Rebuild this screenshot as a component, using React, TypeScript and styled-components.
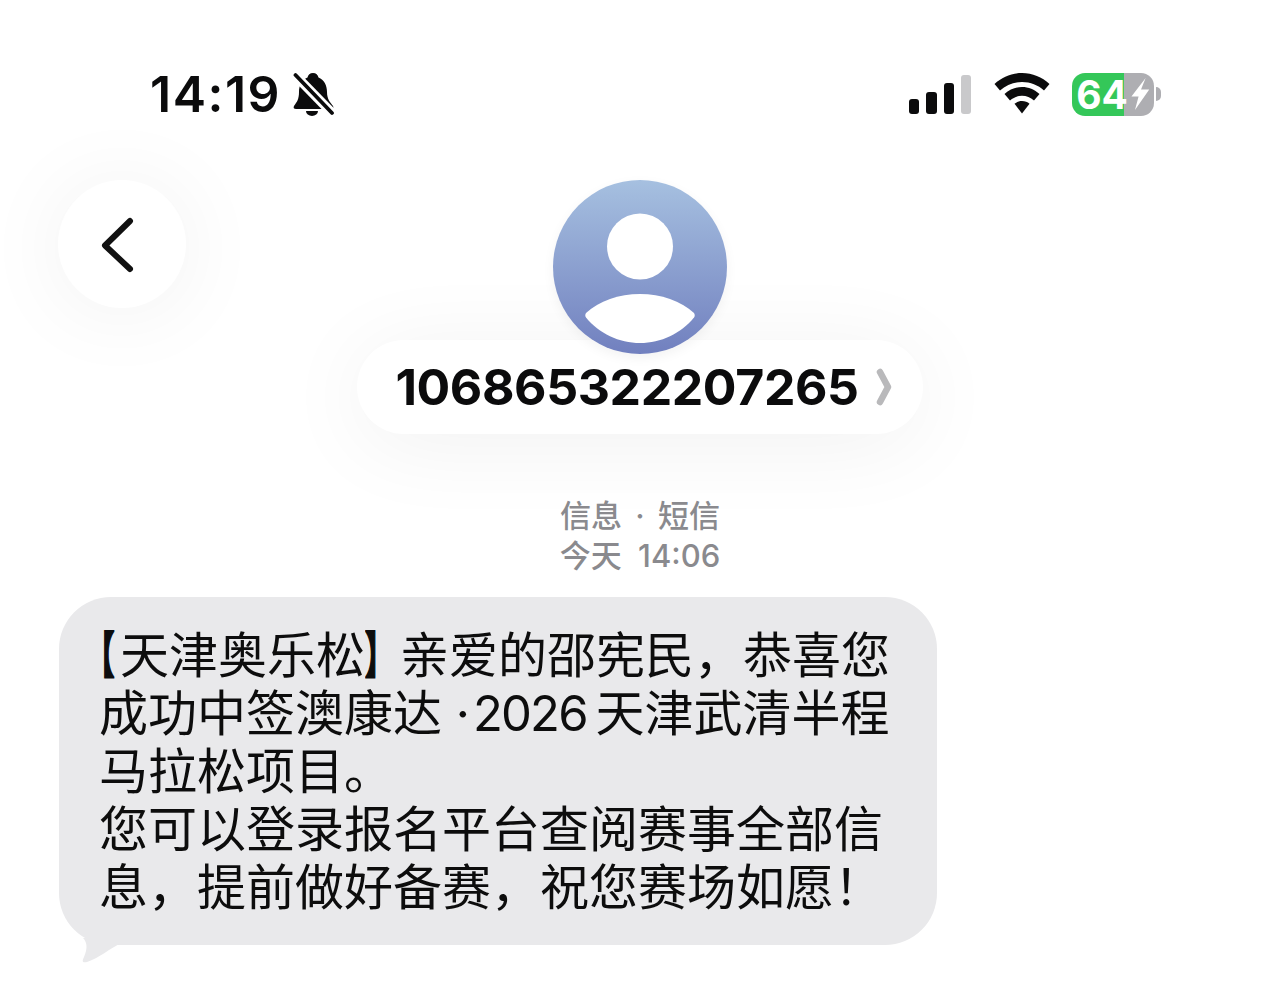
import React from 'react'
import styled, { createGlobalStyle } from 'styled-components'

const GlobalStyle = createGlobalStyle`
	html, body {
		margin: 0;
		padding: 0;
		background: #ffffff;
	}
	body {
		font-family: Inter, "Noto Sans CJK SC", sans-serif;
		color: #0b0b0c;
	}
`

export default function App() {
	return (
		<Page>
			<GlobalStyle />
			<StatusBar>
				<TimeGroup>
					<Time>14:19</Time>
					<svg width="42" height="44" viewBox="0 0 42 44">
						<path
							d="M20 1c3 0 5 2 5.500 4.500C31 8 34 13 34 20c0 7 3 10 6 14 1 2 0 3-2 3H3c-2 0-3-1-2-3 3-4 5-7 5-14C6 13 9 8 14.500 5.500 15 3 17 1 20 1z"
							fill="#0b0b0c"
						/>
						<path d="M13 39h12a6 5 0 0 1-12 0z" fill="#0b0b0c" />
						<path d="M0 1L41 43" stroke="#ffffff" strokeWidth="9.500" />
						<path d="M2.500 3L39 41" stroke="#0b0b0c" strokeWidth="3.800" strokeLinecap="round" />
					</svg>
				</TimeGroup>
				<Indicators>
					<SignalBars>
						<Bar $height={15} />
						<Bar $height={22} />
						<Bar $height={31} />
						<Bar $height={39} $off />
					</SignalBars>
					<WifiIcon width="56" height="41" viewBox="0 0 56 41">
						<path d="M28 0c10.500 0 20 4 27.500 11l-5.500 6.500C44 12 36.500 9 28 9S12 12 6 17.500L.5 11C8 4 17.500 0 28 0z" fill="#0b0b0c" />
						<path d="M28 14c6.500 0 12.500 2.500 17.500 7L40 27.500c-3.500-3-7.500-4.800-12-4.800S19.500 24.500 16 27.500L10.500 21c5-4.500 11-7 17.500-7z" fill="#0b0b0c" />
						<path d="M28 28c3 0 5.500 1 7.500 2.800L28 40.500l-7.500-9.700C22.500 29 25 28 28 28z" fill="#0b0b0c" />
					</WifiIcon>
					<BatteryWrap>
						<Battery $level={64}>
							<span>64</span>
							<svg width="19" height="32" viewBox="0 0 17 30">
								<path d="M13.300 0L0 17.300h6.700L3.300 30 16.700 10.700H9z" fill="#ffffff" />
							</svg>
						</Battery>
						<BatteryNub />
					</BatteryWrap>
				</Indicators>
			</StatusBar>

			<Header>
				<BackButton>
					<svg width="40" height="60" viewBox="0 0 40 60">
						<path d="M30 5L5 29.500L30 53" fill="none" stroke="#111111" strokeWidth="6" strokeLinecap="round" strokeLinejoin="round" />
					</svg>
				</BackButton>
				<Contact>
					<Avatar>
						<svg width="174" height="174" viewBox="0 0 174 174">
							<circle cx="87" cy="66.500" r="33" fill="#ffffff" />
							<path
								d="M33 133c13-12 33-19 54-19s41 7 54 19c1 1.500 1 3 0 4.500-13 16-33 25.500-54 25.500s-41-9.500-54-25.500c-1-1.500-1-3 0-4.500z"
								fill="#ffffff"
							/>
						</svg>
					</Avatar>
					<NamePill>
						<PhoneNumber>106865322207265</PhoneNumber>
						<svg width="18" height="38" viewBox="0 0 18 38">
							<path d="M5 4L13 19L5 34" fill="none" stroke="#b9b9bb" strokeWidth="6.500" strokeLinecap="round" strokeLinejoin="round" />
						</svg>
					</NamePill>
				</Contact>
			</Header>

			<Meta>
				<MetaLine $spacing={5}>信息 · 短信</MetaLine>
				<MetaLine $spacing={8}>今天 14:06</MetaLine>
			</Meta>

			<Bubble>
				<Line>
					<Bracket $open>【</Bracket>天津奥乐松<Bracket>】</Bracket>亲爱的邵宪民，恭喜您
				</Line>
				<Line>
					成功中签澳康达 ·<Digits>2026</Digits> 天津武清半程
				</Line>
				<Line>马拉松项目。</Line>
				<Line>您可以登录报名平台查阅赛事全部信</Line>
				<Line>息，提前做好备赛，祝您赛场如愿！</Line>
				<BubbleTail width="44" height="28" viewBox="0 0 44 28">
					<path d="M4 0c4 4 5 10 1 19-2 4-2 6 3 5 12-4 22-13 36-20V0z" fill="#e9e9eb" />
				</BubbleTail>
			</Bubble>
		</Page>
	)
}

const Page = styled.div`
	width: 1280px;
	height: 998px;
	overflow: hidden;
	display: flex;
	flex-direction: column;
	background: #ffffff;
`

const StatusBar = styled.div`
	display: flex;
	align-items: center;
	justify-content: space-between;
	height: 44px;
	margin-top: 72px;
	padding: 0 119px 0 150px;
`

const TimeGroup = styled.div`
	display: flex;
	align-items: center;
	gap: 12px;
`

const Time = styled.span`
	font-size: 50px;
	font-weight: 600;
	line-height: 44px;
	letter-spacing: 1.500px;
`

const Indicators = styled.div`
	display: flex;
	align-items: center;
	gap: 22px;
`

const SignalBars = styled.div`
	display: flex;
	align-items: flex-end;
	gap: 7px;
	height: 40px;
	margin-right: 1px;
`

const Bar = styled.div<{ $height: number; $off?: boolean }>`
	width: 10.250px;
	height: ${(p) => p.$height}px;
	border-radius: 3px;
	background: ${(p) => (p.$off ? '#c9c9cb' : '#0b0b0c')};
`

const WifiIcon = styled.svg`
	margin-bottom: 2px;
`

const BatteryWrap = styled.div`
	display: flex;
	align-items: center;
	gap: 2px;
`

const Battery = styled.div<{ $level: number }>`
	display: flex;
	align-items: center;
	justify-content: center;
	gap: 3px;
	width: 82px;
	height: 43px;
	border-radius: 13px;
	background: linear-gradient(
		to right,
		#34c759 ${(p) => p.$level}%,
		#aeaeb2 ${(p) => p.$level}%
	);
	color: #ffffff;
	font-size: 39px;
	font-weight: 700;
	line-height: 43px;
`

const BatteryNub = styled.div`
	width: 5px;
	height: 14px;
	border-radius: 0 5px 5px 0;
	background: #aeaeb2;
`

const Header = styled.div`
	display: grid;
	grid-template-columns: 1fr auto 1fr;
	padding: 0 58px;
	margin-top: 64px;
`

const BackButton = styled.div`
	display: flex;
	align-items: center;
	justify-content: center;
	width: 128px;
	height: 128px;
	padding: 3px 4px 0 0;
	box-sizing: border-box;
	border-radius: 50%;
	background: #ffffff;
	box-shadow: 0 4px 90px rgba(0, 0, 0, 0.06);
`

const Contact = styled.div`
	grid-column: 2;
	display: flex;
	flex-direction: column;
	align-items: center;
`

const Avatar = styled.div`
	position: relative;
	z-index: 1;
	width: 174px;
	height: 174px;
	border-radius: 50%;
	background: linear-gradient(to bottom, #a6c0e0, #7180bf);
	box-shadow: 0 4px 12px rgba(0, 0, 0, 0.05);
`

const NamePill = styled.div`
	display: flex;
	align-items: center;
	gap: 16px;
	height: 94px;
	margin-top: -14px;
	padding: 0 30px 0 38px;
	border-radius: 47px;
	background: #ffffff;
	box-shadow: 0 10px 90px rgba(0, 0, 0, 0.06);
`

const PhoneNumber = styled.span`
	font-size: 50px;
	font-weight: 700;
	letter-spacing: -0.400px;
	line-height: 94px;
	color: #0b0b0c;
`

const Meta = styled.div`
	margin-top: 62px;
	text-align: center;
	font-size: 31px;
	font-weight: 500;
	line-height: 40px;
	color: #8a8a8e;
`

const MetaLine = styled.div<{ $spacing: number }>`
	word-spacing: ${(p) => p.$spacing}px;
`

const Bubble = styled.div`
	position: relative;
	width: 878px;
	height: 348px;
	margin: 21px 0 0 59px;
	padding: 30px 0 0 40px;
	box-sizing: border-box;
	border-radius: 52px;
	background: #e9e9eb;
`

const Line = styled.div`
	font-family: Inter, "Noto Sans CJK SC", sans-serif;
	font-size: 49px;
	line-height: 58px;
	white-space: pre;
	color: #0d0d0d;
`

// the reference's corner brackets are narrow, about half of a CJK cell
const Bracket = styled.span<{ $open?: boolean }>`
	display: inline-block;
	width: ${(p) => (p.$open ? 21 : 35)}px;
	font-weight: 900;
	transform-origin: left center;
	transform: ${(p) => (p.$open ? 'translateX(-13px) ' : '')}scaleX(0.58);
	-webkit-text-stroke: 2px #0d0d0d;
`

const Digits = styled.span`
	margin: 0 -5px 0 3px;
	letter-spacing: -1.800px;
`

const BubbleTail = styled.svg`
	position: absolute;
	left: 20px;
	top: 341px;
`
